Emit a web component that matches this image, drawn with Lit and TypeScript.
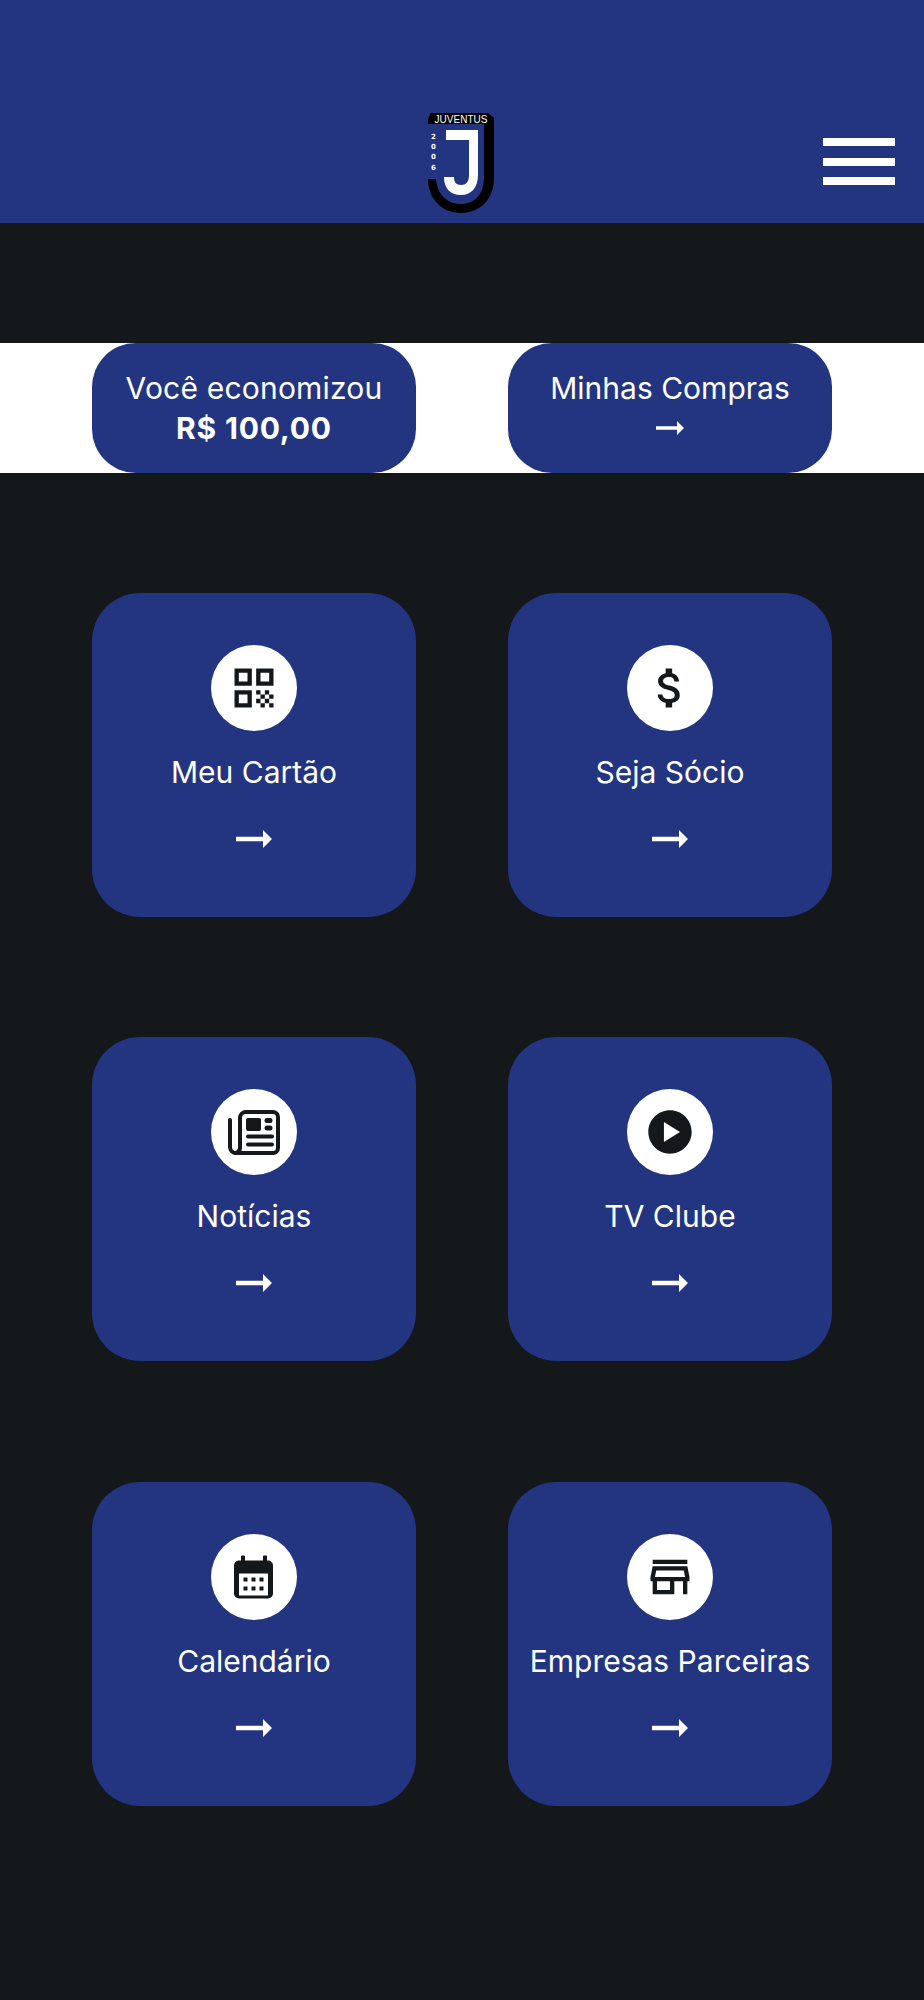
import { LitElement, html, css, svg } from "lit";
import { customElement } from "lit/decorators.js";

const MD = (d: string) => html`<svg class="ic" viewBox="0 0 24 24"><path d=${d}></path></svg>`;

const icons: Record<string, unknown> = {
  qr: MD("M3 11h8V3H3v8zm2-6h4v4H5V5zM3 21h8v-8H3v8zm2-6h4v4H5v-4zM13 3v8h8V3h-8zm6 6h-4V5h4v4zM19 19h2v2h-2zM13 13h2v2h-2zM15 15h2v2h-2zM13 17h2v2h-2zM15 19h2v2h-2zM17 17h2v2h-2zM17 13h2v2h-2zM19 15h2v2h-2z"),
  money: MD("M11.8 10.9c-2.27-.59-3-1.2-3-2.15 0-1.09 1.01-1.85 2.7-1.85 1.78 0 2.44.85 2.5 2.1h2.21c-.07-1.72-1.12-3.3-3.21-3.81V3h-3v2.16c-1.94.42-3.5 1.68-3.5 3.61 0 2.31 1.91 3.46 4.7 4.13 2.5.6 3 1.48 3 2.41 0 .69-.49 1.79-2.7 1.79-2.06 0-2.87-.92-2.98-2.1h-2.2c.12 2.19 1.76 3.42 3.68 3.83V21h3v-2.15c1.95-.37 3.5-1.5 3.5-3.55 0-2.84-2.43-3.81-4.7-4.4z"),
  news: html`<svg class="ic" viewBox="0 0 52 52">
    <g fill="none" stroke="#14181b" stroke-width="4" stroke-linecap="round">
      <path d="M18 6H45a5 5 0 0 1 5 5V42a5 5 0 0 1-5 5H8a6 6 0 0 1-6-6V14" />
      <path d="M18 6a6 6 0 0 0-6 6V41a6 6 0 0 1-4 6" />
      <path d="M20 30.500H44M20 38.500H44" />
      <path d="M39 14.500h3M39 22h3" stroke-width="5" />
    </g>
    <rect x="18" y="12" width="15" height="13" rx="2" fill="#14181b" />
  </svg>`,
  play: MD("M12 2C6.48 2 2 6.48 2 12s4.48 10 10 10 10-4.48 10-10S17.52 2 12 2zm-2.800 14.600v-9.200l7.400 4.600-7.400 4.600z"),
  cal: html`<svg class="ic" viewBox="0 0 52 52">
    <path fill="#14181b" fill-rule="evenodd" d="M13 5.500a1 1 0 0 1 1-1h2a1 1 0 0 1 1 1v4H35v-4a1 1 0 0 1 1-1h2a1 1 0 0 1 1 1v4h1a5 5 0 0 1 5 5v28a5 5 0 0 1-5 5H11a5 5 0 0 1-5-5v-28a5 5 0 0 1 5-5h2zM11 22.500V44.500H40V22.500z" />
    <g fill="#14181b">
      <rect x="15.500" y="26.500" width="4" height="4"/><rect x="23.500" y="26.500" width="4" height="4"/><rect x="31.500" y="26.500" width="4" height="4"/>
      <rect x="15.500" y="35.500" width="4" height="4"/><rect x="23.500" y="35.500" width="4" height="4"/><rect x="31.500" y="35.500" width="4" height="4"/>
    </g>
  </svg>`,
  store: MD("M18.36 9l.6 3H5.04l.6-3h12.72M20 4H4v2h16V4zm0 3H4l-1 5v2h1v6h10v-6h4v6h2v-6h1v-2l-1-5zM6 18v-4h6v4H6z"),
};

const arrow = html`<svg class="arrow" viewBox="0 0 36 18"><path d="M0 6.700h27V0l9 9-9 9v-6.700H0z" fill="#fff"></path></svg>`;

const cards = [
  ["Meu Cartão", "qr"],
  ["Seja Sócio", "money"],
  ["Notícias", "news"],
  ["TV Clube", "play"],
  ["Calendário", "cal"],
  ["Empresas Parceiras", "store"],
];

const logo = html`<svg class="logo" viewBox="0 0 66 100">
  ${svg`
  <path d="M3 0H60L66 5V65C66 86 52 100 33 100C14 100 0 86 0 66V6Z" fill="#000"/>
  <path d="M0 11H56V64C56 81 47 91 33 91C19 91 9 81 8 66H0Z" fill="#233580"/>
  <path d="M18 17H50V62C50 75 43 82 33 82C22 82 16 75 16 64H26C26 69 28 72 33 72C38 72 41 69 41 62V27H18Z" fill="#fff"/>
  <text class="lt" x="33" y="10.400">JUVENTUS</text>
  <text class="yr" x="5.500" y="26">2</text>
  <text class="yr" x="5.500" y="36">0</text>
  <text class="yr" x="5.500" y="46">0</text>
  <text class="yr" x="5.500" y="57">6</text>
  `}
</svg>`;

@customElement("app-root")
export class AppRoot extends LitElement {
  static styles = css`
    :host {
      display: block;
      min-height: 2000px;
      background: #14181b;
      font-family: "Inter", "Liberation Sans", sans-serif;
      color: #fff;
    }
    header {
      height: 222.670px;
      background: #233580;
      display: flex;
      align-items: flex-end;
      justify-content: center;
      position: relative;
      box-sizing: border-box;
      padding: 0 3px 9.670px 0;
    }
    .logo { width: 66px; height: 100px; display: block; overflow: visible; }
    .lt { font: 400 10px "Liberation Sans", sans-serif; fill: #fff; text-anchor: middle; }
    .yr { font: 700 7px "DejaVu Sans", sans-serif; fill: #fff; text-anchor: middle; }
    .menu {
      position: absolute;
      left: 823px;
      top: 138px;
      width: 72px;
      display: flex;
      flex-direction: column;
      gap: 11.500px;
    }
    .menu span { display: block; height: 8px; background: #fff; }
    .band {
      margin-top: 120px;
      height: 130px;
      background: #fff;
      display: grid;
      grid-template-columns: 324px 324px;
      column-gap: 92px;
      justify-content: center;
    }
    .pill {
      background: #233580;
      border-radius: 44px;
      display: flex;
      flex-direction: column;
      align-items: center;
      justify-content: center;
      font-size: 30px;
      line-height: 40px;
    }
    .pill .save { letter-spacing: 0.200px; }
    .pill b { font-weight: 700; letter-spacing: 0.800px; }
    .pill .arrow { width: 28px; height: 14px; margin: 13px 0; }
    .grid {
      margin-top: 120px;
      display: grid;
      grid-template-columns: 324px 324px;
      grid-auto-rows: 324px;
      column-gap: 92px;
      row-gap: 120.670px;
      justify-content: center;
    }
    .card {
      background: #233580;
      border-radius: 48px;
      display: flex;
      flex-direction: column;
      align-items: center;
      padding-top: 52px;
      box-sizing: border-box;
    }
    .circle {
      width: 86px;
      height: 86px;
      border-radius: 50%;
      background: #fff;
      display: flex;
      align-items: center;
      justify-content: center;
    }
    .ic { width: 52px; height: 52px; fill: #14181b; display: block; }
    .label { font-size: 30px; line-height: 40px; margin-top: 21px; white-space: nowrap; }
    .card .arrow { width: 36px; height: 18px; margin-top: 38px; }
  `;

  render() {
    return html`
      <header>
        ${logo}
        <div class="menu"><span></span><span></span><span></span></div>
      </header>
      <section class="band">
        <div class="pill"><span class="save">Você economizou</span><b>R$ 100,00</b></div>
        <div class="pill"><span>Minhas Compras</span>${arrow}</div>
      </section>
      <section class="grid">
        ${cards.map(
          ([t, i]) => html`<div class="card">
            <div class="circle">${icons[i]}</div>
            <div class="label">${t}</div>
            ${arrow}
          </div>`
        )}
      </section>
    `;
  }
}
